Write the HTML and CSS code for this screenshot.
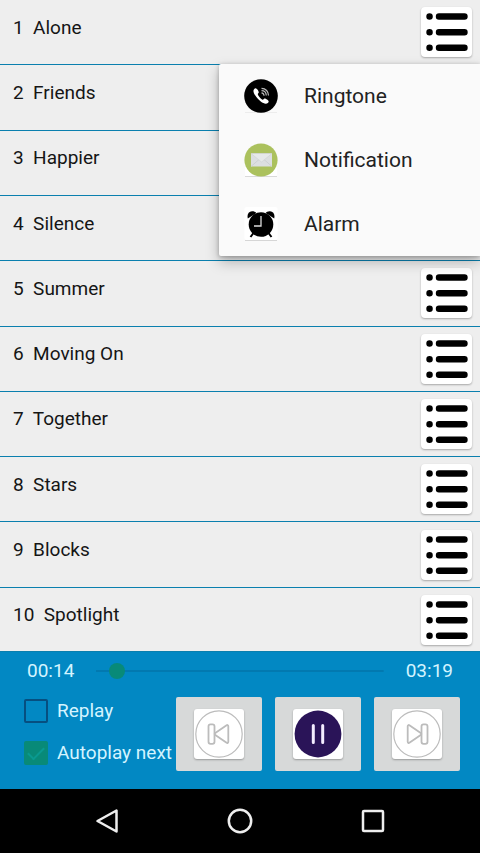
FILE: index.html
```html
<!DOCTYPE html>
<html lang="en">
<head>
<meta charset="utf-8">
<meta name="viewport" content="width=device-width, initial-scale=1">
<title>Music player</title>
<link rel="stylesheet" href="styles.css">
</head>
<body>
<svg class="defs" aria-hidden="true">
  <symbol id="list" viewBox="0 0 50 50">
    <g stroke="#000" stroke-width="6.400" stroke-linecap="round">
      <path d="M8 9.500h.1M8 25.200h.1M8 40.800h.1M17.500 9.500H43M17.500 25.200H43M17.500 40.800H43"/>
    </g>
  </symbol>
</svg>
<main class="screen">
  <ol class="songs">
    <li class="song"><span class="title">1  Alone</span><button class="more" aria-label="Options for Alone"><svg><use href="#list"/></svg></button></li>
    <li class="song"><span class="title">2  Friends</span><button class="more" aria-label="Options for Friends"><svg><use href="#list"/></svg></button></li>
    <li class="song"><span class="title">3  Happier</span><button class="more" aria-label="Options for Happier"><svg><use href="#list"/></svg></button></li>
    <li class="song"><span class="title">4  Silence</span><button class="more" aria-label="Options for Silence"><svg><use href="#list"/></svg></button></li>
    <li class="song"><span class="title">5  Summer</span><button class="more" aria-label="Options for Summer"><svg><use href="#list"/></svg></button></li>
    <li class="song"><span class="title">6  Moving On</span><button class="more" aria-label="Options for Moving On"><svg><use href="#list"/></svg></button></li>
    <li class="song"><span class="title">7  Together</span><button class="more" aria-label="Options for Together"><svg><use href="#list"/></svg></button></li>
    <li class="song"><span class="title">8  Stars</span><button class="more" aria-label="Options for Stars"><svg><use href="#list"/></svg></button></li>
    <li class="song"><span class="title">9  Blocks</span><button class="more" aria-label="Options for Blocks"><svg><use href="#list"/></svg></button></li>
    <li class="song"><span class="title">10  Spotlight</span><button class="more" aria-label="Options for Spotlight"><svg><use href="#list"/></svg></button></li>
  </ol>

  <div class="menu" role="menu">
    <button class="menu-item" role="menuitem">
      <svg viewBox="0 0 34 34" aria-hidden="true">
        <path d="M1 34h32" stroke="#dedede"/>
        <circle cx="17" cy="17" r="16.800"/>
        <path d="M11.300 9.200c-2.500 1.300-2.500 4 .2 7.600 3.300 4.700 7.300 7.900 10.300 8 1.600 0 2.900-1.300 2.900-2.500 0-.9-3.200-3-4.200-2.800-.8.200-1.100 1.600-2.100 1.200-1.700-.8-4.200-3.600-4.600-5.400-.2-.9 1-1.200 1-2.100 0-1.200-2.200-4.500-3.500-4z" fill="#fff"/>
        <g fill="none" stroke="#bbb" stroke-width="1.200"><path d="M17.500 13.800c1.500.2 2.500 1.500 2.600 3"/><path d="M17.500 11.600c3 0 4.700 2.300 4.800 5"/><path d="M17.500 9.400c4.400 0 6.900 3.300 7 7"/></g>
      </svg>
      <span>Ringtone</span>
    </button>
    <button class="menu-item" role="menuitem">
      <svg viewBox="0 0 34 34" aria-hidden="true">
        <path d="M1 20h32v12a1 1 0 0 1-1 1H2a1 1 0 0 1-1-1z" fill="#fff"/>
        <path d="M1 33.600h32" stroke="#d6d6d6"/>
        <circle cx="17" cy="17" r="16.600" fill="#abc15d"/>
        <path d="M7 10.500h21v13H7z" fill="#dcdfe0"/>
        <path d="M7 23.500l8-7M28 23.500l-8-7" stroke="#cdd1d2"/>
        <path d="M7 10.500h21L17.500 19z" fill="#e6e9e9" stroke="#ced2d2" stroke-width=".6"/>
      </svg>
      <span>Notification</span>
    </button>
    <button class="menu-item" role="menuitem">
      <svg viewBox="0 0 34 34" aria-hidden="true">
        <rect x=".5" width="33" height="33" rx="2" fill="#fff"/>
        <path d="M1 33.500h32" stroke="#d6d6d6"/>
        <path d="M3.800 11.500C2.800 7.500 4.500 4.500 8 4.200c2-.1 3.500.6 4.300 1.800zM30.200 11.500c1-4-.7-7-4.200-7.300-2-.1-3.500.6-4.300 1.800z"/>
        <circle cx="17" cy="17.500" r="12.300"/>
        <path d="M9.500 26l-3 4M24.500 26l3 4" stroke="#000" stroke-width="2"/>
        <path d="M17 9v10h-7" fill="none" stroke="#ddd" stroke-width="1.300"/>
      </svg>
      <span>Alarm</span>
    </button>
  </div>

  <section class="player" aria-label="Player">
    <div class="progress">
      <span>00:14</span>
      <input class="seek" type="range" min="0" max="199" value="9" aria-label="Position">
      <span>03:19</span>
    </div>
    <div class="controls">
      <div class="options">
        <label class="option"><input type="checkbox">Replay</label>
        <label class="option"><input type="checkbox" checked>Autoplay next</label>
      </div>
      <div class="transport">
        <button class="key" aria-label="Previous">
          <svg viewBox="0 0 50 50"><g fill="none" stroke="#bcbcbc"><circle cx="25" cy="25" r="23.200" stroke-width="1.200"/><g stroke-width="1.800" stroke-linejoin="round"><rect x="14.500" y="15.300" width="6" height="19.500" rx="2"/><path d="M34.300 17.300v15.500c0 1-.9 1.500-1.700 1L21.300 26c-.8-.5-.8-1.500 0-2l11.300-7.800c.8-.5 1.700 0 1.700 1.100z"/></g></g></svg>
        </button>
        <button class="key" aria-label="Pause">
          <svg viewBox="0 0 50 50"><circle cx="25" cy="25" r="23.400" fill="#2a1458"/><path d="M20.300 16.500v17M29.700 16.500v17" stroke="#f4edff" stroke-width="3" stroke-linecap="round"/></svg>
        </button>
        <button class="key" aria-label="Next">
          <svg viewBox="0 0 50 50"><g fill="none" stroke="#bcbcbc"><circle cx="25" cy="25" r="23.200" stroke-width="1.200"/><g stroke-width="1.800" stroke-linejoin="round"><rect x="29.500" y="15.300" width="6" height="19.500" rx="2"/><path d="M15.700 17.300v15.500c0 1 .9 1.500 1.700 1L28.700 26c.8-.5.8-1.500 0-2l-11.300-7.800c-.8-.5-1.700 0-1.700 1.100z"/></g></g></svg>
        </button>
      </div>
    </div>
  </section>

  <nav class="system" aria-label="System">
    <button aria-label="Back"><svg viewBox="0 0 26 26"><path d="M22.500 2.500v21L3.500 13z"/></svg></button>
    <button aria-label="Home"><svg viewBox="0 0 26 26"><circle cx="13" cy="13" r="11.200"/></svg></button>
    <button aria-label="Recent apps"><svg viewBox="0 0 26 26"><rect x="3" y="3" width="20" height="20" rx="1"/></svg></button>
  </nav>
</main>
</body>
</html>
```
FILE: styles.css
```css
* {
  box-sizing: border-box;
}

body {
  margin: 0;
  font: 19px/24px Roboto, "Liberation Sans", sans-serif;
  color: #151515;
  background: #000;
}

button {
  margin: 0;
  padding: 0;
  border: 0;
  background: none;
  font: inherit;
  color: inherit;
}

svg {
  display: block;
}

.defs {
  position: absolute;
  width: 0;
  height: 0;
}

.screen {
  position: relative;
  display: flex;
  flex-direction: column;
  min-height: 100vh;
}

.songs {
  flex: 1;
  display: grid;
  grid-auto-rows: 1fr;
  margin: 0 0 -2px;
  padding: 0;
  list-style: none;
  background: #eee;
}

.song {
  display: flex;
  align-items: center;
  justify-content: space-between;
  padding: 0 8px 0 13px;
  border-bottom: 1px solid #0a7fae;
}

.song:last-child {
  border-bottom-color: transparent;
}

.title {
  padding-bottom: 9px;
  white-space: pre;
}

.more {
  width: 51px;
  height: 50px;
  border-radius: 4px;
  background: #fff;
  box-shadow: 0 1px 2px rgba(0, 0, 0, .3);
}

.more svg {
  width: 100%;
  height: 100%;
}

.menu {
  position: absolute;
  top: 64px;
  right: 0;
  width: 261px;
  border-radius: 2px 0 0 2px;
  background: #fafafa;
  box-shadow: 0 6px 14px rgba(0, 0, 0, .25), 0 1px 4px rgba(0, 0, 0, .25);
}

.menu-item {
  display: flex;
  align-items: center;
  gap: 26px;
  width: 100%;
  height: 64px;
  padding-left: 25px;
  font-size: 21px;
  line-height: 26px;
  color: #222;
}

.menu-item svg {
  width: 34px;
  height: 34px;
}

.player {
  position: relative;
  padding: 7px 20px 18px 24px;
  background: #0288c3;
  border-top: 1px solid #0a7fae;
  color: #d4f4ff;
}

.progress {
  display: flex;
  align-items: center;
  justify-content: space-between;
  padding: 0 7px 0 3px;
}

.seek {
  flex: 1;
  height: 18px;
  margin: 0 22px;
  appearance: none;
  background: linear-gradient(#0279b0, #0279b0) center / 100% 2px no-repeat;
}

.seek::-webkit-slider-thumb {
  appearance: none;
  width: 16px;
  height: 16px;
  border-radius: 50%;
  background: #088a78;
}

.controls {
  display: flex;
  align-items: flex-start;
  justify-content: space-between;
  margin-top: 14px;
}

.options {
  display: flex;
  flex-direction: column;
  gap: 18px;
  padding-top: 2px;
}

.option {
  display: flex;
  align-items: center;
  gap: 9px;
  white-space: nowrap;
}

.option input {
  appearance: none;
  width: 24px;
  height: 24px;
  margin: 0;
  border: 2px solid #064f80;
  border-radius: 2px;
}

.option input:checked {
  display: grid;
  place-items: center;
  border-color: #088a78;
  background: #088a78;
}

.option input:checked::after {
  content: "";
  width: 14px;
  height: 7px;
  margin-bottom: 4px;
  border: solid #0a9a90;
  border-width: 0 0 2px 2px;
  rotate: -45deg;
}

.transport {
  display: flex;
  gap: 13px;
}

.key {
  display: grid;
  place-items: center;
  width: 86px;
  height: 74px;
  border-radius: 2px;
  background: #d7d9d9;
}

.key svg {
  width: 50px;
  height: 50px;
  border-radius: 3px;
  background: #fff;
  box-shadow: 0 1px 2px rgba(0, 0, 0, .3);
}

.system {
  display: flex;
  align-items: center;
  justify-content: center;
  gap: 107px;
  height: 64px;
  background: #000;
}

.system svg {
  width: 26px;
  height: 26px;
  fill: none;
  stroke: #eee;
  stroke-width: 2.5;
  stroke-linejoin: round;
}
```
